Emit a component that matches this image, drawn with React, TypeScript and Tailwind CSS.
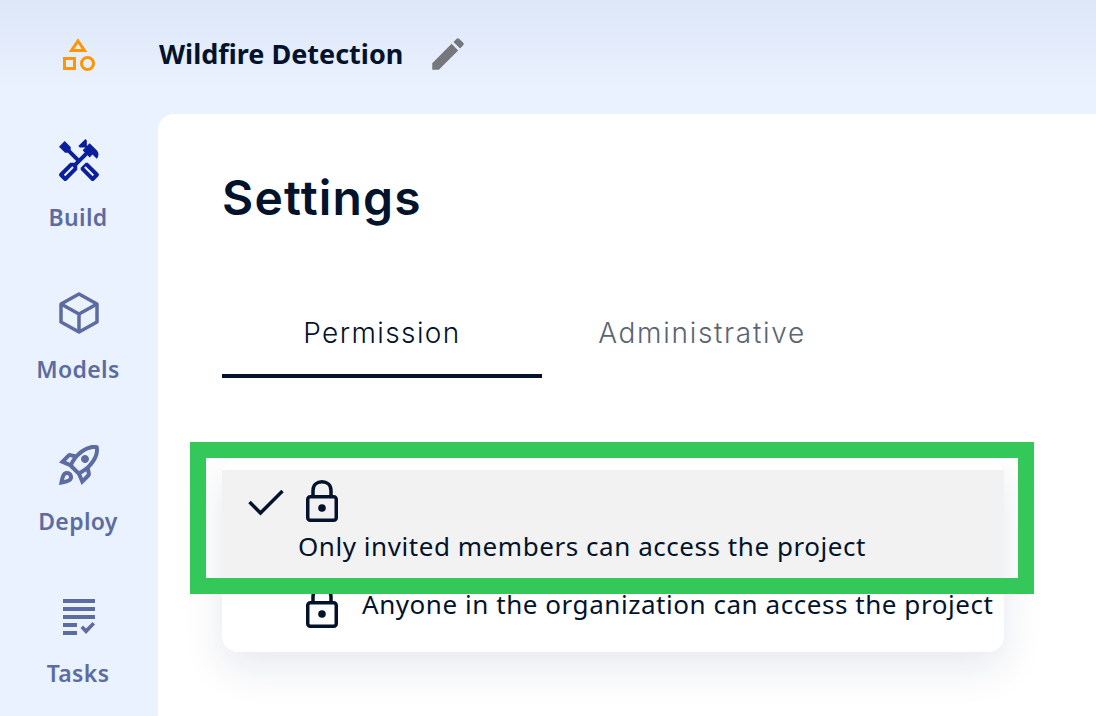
import { MdEdit, MdOutlineHandyman, MdOutlineRocketLaunch } from 'react-icons/md';
import type { ReactNode } from 'react';

function Logo() {
  return (
    <svg width="34" height="34" viewBox="0 0 34 34" fill="none" stroke="#ff9500" strokeWidth="3">
      <path d="M16 3 L22.5 12.5 H9.5 Z" />
      <rect x="2.5" y="20.5" width="10" height="10" />
      <circle cx="25.5" cy="25.5" r="6" />
    </svg>
  );
}

function BoxIcon() {
  return (
    <svg width="42" height="42" viewBox="0 0 42 42" fill="none" stroke="#5c6ca0" strokeWidth="3.5" strokeLinejoin="round">
      <path d="M21 2 L39 12 V30 L21 40 L3 30 V12 Z" />
      <path d="M3 12 L21 22 L39 12 M21 22 V40" />
    </svg>
  );
}

function TasksIcon() {
  return (
    <svg width="32" height="36" viewBox="0 0 32 36" fill="#5c6ca0">
      <rect x="0" y="0" width="32" height="4" />
      <rect x="0" y="8" width="32" height="4" />
      <rect x="0" y="16" width="32" height="4" />
      <rect x="0" y="24" width="14" height="4" />
      <rect x="0" y="32" width="14" height="4" />
      <path d="M17.5 29 L20 26.5 L23 29.5 L29.5 23 L32 25.5 L23 35 Z" />
    </svg>
  );
}

function LockIcon() {
  return (
    <svg width="32" height="42" viewBox="0 0 32 42" fill="none" stroke="#03132b" strokeWidth="3.5">
      <rect x="1.75" y="16.75" width="28.5" height="23.5" rx="2.5" />
      <path d="M7 16 V10.5 C7 5 11 1.75 16 1.75 C21 1.75 25 5 25 10.5 V16" />
      <circle cx="16" cy="28" r="3.8" fill="#03132b" stroke="none" />
    </svg>
  );
}

function CheckIcon() {
  return (
    <svg width="36" height="28" viewBox="0 0 36 28" fill="none" stroke="#03132b" strokeWidth="3.5">
      <path d="M1.5 14 L12.5 25 L34.5 3" />
    </svg>
  );
}

function NavItem({ icon, label, active }: { icon: ReactNode; label: string; active?: boolean }) {
  return (
    <div className="flex h-[152px] flex-col items-center pr-[2px]">
      <div className={`-mt-[1px] flex h-[48px] w-[48px] translate-x-[1px] items-center justify-center ${active ? 'text-[#0a1f9c]' : 'text-[#5c6ca0]'}`}>
        {icon}
      </div>
      <span className="mt-[18px] text-[23px] leading-[28px] font-semibold tracking-[0.35px] text-[#5c6ca0]">{label}</span>
    </div>
  );
}

export default function App() {
  return (
    <div className="relative h-[716px] w-[1096px] overflow-hidden bg-[#ebf2ff] font-['Noto_Sans',sans-serif] text-[#03132b]">
      {/* Soft shade along the top edge */}
      <div className="pointer-events-none absolute inset-x-0 top-0 h-[96px] bg-gradient-to-b from-[#dde7f8] to-transparent" />

      <div className="relative flex h-full">
        <aside className="w-[158px] shrink-0">
          <div className="flex h-[138px] justify-center pt-[38px]">
            <Logo />
          </div>
          <NavItem active icon={<MdOutlineHandyman size={48} />} label="Build" />
          <NavItem icon={<BoxIcon />} label="Models" />
          <NavItem icon={<MdOutlineRocketLaunch size={48} />} label="Deploy" />
          <NavItem icon={<TasksIcon />} label="Tasks" />
        </aside>

        <main className="flex min-w-0 flex-1 flex-col">
          <header className="flex h-[114px] shrink-0 items-start pt-[36px] pl-[1px]">
            <h2 className="text-[27px] leading-[36px] font-bold tracking-[0px]">Wildfire Detection</h2>
            <MdEdit size={42} className="-mt-[3px] ml-[24px] text-[#75777c]" />
          </header>

          <section className="flex-1 rounded-tl-[16px] bg-white pt-[56px] pl-[64px]">
            <h1 className="font-['Inter',sans-serif] text-[48px] leading-[56px] font-semibold tracking-[1.2px]">Settings</h1>

            <div className="mt-[76px] flex">
              <div className="flex h-[76px] w-[320px] justify-center border-b-[4px] border-[#03132b] pt-[13px] font-['Inter',sans-serif] text-[28px] leading-[36px] font-light tracking-[1.4px]">
                Permission
              </div>
              <div className="flex h-[76px] w-[320px] justify-center pt-[13px] font-['Inter',sans-serif] text-[28px] leading-[36px] font-light tracking-[1.7px] text-[#5b6472]">
                Administrative
              </div>
            </div>

            {/* Permission dropdown */}
            <div className="mt-[80px] h-[194px] w-[782px] rounded-[16px] bg-white pt-[12px] shadow-[0_16px_40px_rgba(20,40,90,0.1)]">
              <div className="h-[108px] bg-[#f2f2f2] pt-[10px]">
                <div className="flex items-start pl-[26px]">
                  <div className="mt-[8px]">
                    <CheckIcon />
                  </div>
                  <div className="ml-[22px]">
                    <LockIcon />
                  </div>
                </div>
                <p className="mt-[6px] pl-[76px] text-[26px] leading-[36px] tracking-[0.55px]">Only invited members can access the project</p>
              </div>
              <div className="flex items-start pt-[8px] pl-[84px]">
                <LockIcon />
                <p className="ml-[24px] text-[26px] leading-[36px] tracking-[0.55px]">Anyone in the organization can access the project</p>
              </div>
            </div>
          </section>
        </main>
      </div>

      {/* Green annotation frame over the selected option */}
      <div className="absolute top-[442px] left-[190px] h-[152px] w-[844px] border-[16px] border-[#34c85a]" />
    </div>
  );
}
